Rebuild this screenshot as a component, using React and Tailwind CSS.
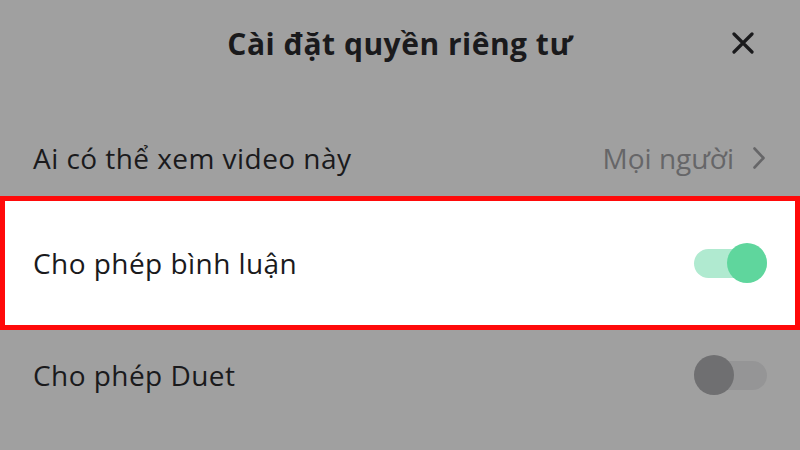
import React from "react";

function Toggle({ on }) {
  return (
    <div
      className={
        "relative w-[73px] h-[29px] rounded-full " +
        (on ? "bg-[#b0ead0]" : "bg-[#959596]")
      }
    >
      <div
        className={
          "absolute top-[-5.5px] w-[40px] h-[40px] rounded-full " +
          (on ? "right-0 bg-[#5fd69d]" : "left-0 bg-[#6f6f71]")
        }
      />
    </div>
  );
}

export default function App() {
  return (
    <div
      className="w-[800px] h-[450px] bg-[#a0a0a0] flex flex-col overflow-hidden text-[#1a1a1c]"
      style={{ fontFamily: '"Open Sans", "Noto Sans", sans-serif' }}
    >
      <div className="h-[86px] grid grid-cols-[1fr_auto_1fr] items-center">
        <div />
        <div className="text-[30px] font-bold tracking-[0.5px]">Cài đặt quyền riêng tư</div>
        <div className="flex justify-end pr-[46px]">
          <svg width="22" height="22" viewBox="0 0 22 22" fill="none" stroke="#1a1a1c" strokeWidth="3.2" strokeLinecap="round">
            <path d="M2 2 L20 20 M20 2 L2 20" />
          </svg>
        </div>
      </div>
      <div className="h-[34px]" />
      <div className="h-[76px] flex items-center justify-between pl-[33px] pr-[35px] text-[28px] tracking-[0.45px]">
        <span>Ai có thể xem video này</span>
        <div className="flex items-center gap-[19px]">
          <span className="text-[#666668] tracking-[0px]">Mọi người</span>
          <svg width="12" height="22" viewBox="0 0 12 22" fill="none" stroke="#666668" strokeWidth="2.6" strokeLinecap="round" strokeLinejoin="round">
            <path d="M1.5 1.5 L10.5 11 L1.5 20.5" />
          </svg>
        </div>
      </div>
      <div className="h-[134px] border-[5px] border-[#ff0a0a] bg-white flex items-center justify-between pl-[28px] pr-[28px] text-[28px] tracking-[0.45px]">
        <span>Cho phép bình luận</span>
        <Toggle on />
      </div>
      <div className="h-[90px] flex items-center justify-between pl-[33px] pr-[33px] text-[28px] tracking-[0.45px]">
        <span>Cho phép Duet</span>
        <Toggle on={false} />
      </div>
    </div>
  );
}
